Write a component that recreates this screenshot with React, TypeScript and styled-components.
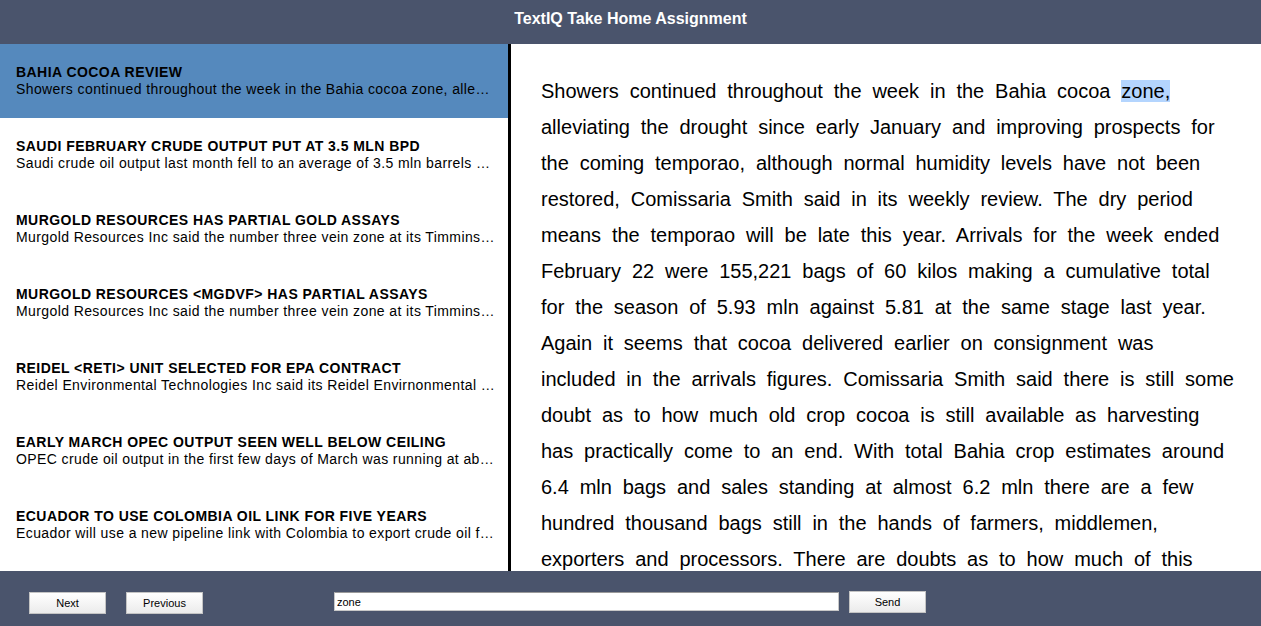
import React, { useState } from "react";
import styled, { createGlobalStyle } from "styled-components";

const GlobalStyle = createGlobalStyle`
  html, body {
    margin: 0;
    padding: 0;
    overflow: hidden;
    background: #ffffff;
  }
  * { box-sizing: border-box; }
`;

const Page = styled.div`
  display: flex;
  flex-direction: column;
  width: 1261px;
  height: 626px;
  font-family: "Liberation Sans", Arial, Helvetica, sans-serif;
  color: #000;
`;

const Header = styled.header`
  flex: 0 0 44px;
  background: #4a546c;
  display: flex;
  justify-content: center;
  align-items: flex-start;
  padding-top: 10px;
`;

const Title = styled.h1`
  margin: 0;
  font-size: 16px;
  line-height: 18px;
  font-weight: 700;
  color: #ffffff;
`;

const Main = styled.main`
  flex: 1 1 auto;
  display: flex;
  min-height: 0;
`;

const List = styled.ul`
  flex: 0 0 511px;
  margin: 0;
  padding: 0;
  list-style: none;
  border-right: 3px solid #000;
  overflow: hidden;
`;

const Item = styled.li<{ $active?: boolean }>`
  height: 74px;
  padding: 20px 12px 20px 16px;
  background: ${(p) => (p.$active ? "#5589bd" : "#ffffff")};
  cursor: pointer;
`;

const ItemTitle = styled.div`
  font-size: 14px;
  line-height: 17px;
  font-weight: 700;
  letter-spacing: 0.45px;
  color: #000;
  white-space: nowrap;
  overflow: hidden;
  text-overflow: ellipsis;
`;

const ItemText = styled.div`
  font-size: 14px;
  line-height: 17px;
  letter-spacing: 0.4px;
  color: #000;
  white-space: nowrap;
  overflow: hidden;
  text-overflow: ellipsis;
`;

const Article = styled.article`
  flex: 1 1 auto;
  padding: 29px 25px 0 30px;
  overflow: hidden;
`;

const Body = styled.p`
  margin: 0;
  font-size: 20px;
  line-height: 36px;
  word-spacing: 5.3px;
  color: #000;
`;

const Mark = styled.span`
  background: #b4d5fe;
`;

const Footer = styled.footer`
  flex: 0 0 55px;
  background: #4a546c;
  display: flex;
  align-items: flex-start;
  padding: 21px 0 0 29px;
`;

const Button = styled.button<{ $offset?: number }>`
  width: 77px;
  height: 22px;
  margin-left: ${(p) => p.$offset ?? 0}px;
  padding: 1px 0 0;
  border: 1px solid #c4c4c4;
  background: linear-gradient(#ffffff, #ebebeb);
  font-family: "Liberation Sans", Arial, sans-serif;
  font-size: 11px;
  line-height: 13px;
  color: #000;
  cursor: pointer;
`;

const Search = styled.input`
  width: 505px;
  height: 19px;
  margin: 0 0 0 131px;
  padding: 0 2px;
  border: 1px solid #c8c8c8;
  border-top-color: #9a9a9a;
  background: #ffffff;
  font-family: "Liberation Sans", Arial, sans-serif;
  font-size: 11px;
  line-height: 13px;
  color: #000;
  outline: none;
`;

const SendButton = styled(Button)`
  margin-left: 10px;
  margin-top: -1px;
  padding: 0;
`;

const docs = [
  {
    title: "BAHIA COCOA REVIEW",
    text: "Showers continued throughout the week in the Bahia cocoa zone, alleviating the drought since early January and improving prospects for the coming temporao.",
  },
  {
    title: "SAUDI FEBRUARY CRUDE OUTPUT PUT AT 3.5 MLN BPD",
    text: "Saudi crude oil output last month fell to an average of 3.5 mln barrels per day (bpd) from 3.8 mln bpd in January.",
  },
  {
    title: "MURGOLD RESOURCES HAS PARTIAL GOLD ASSAYS",
    text: "Murgold Resources Inc said the number three vein zone at its Timmins, Ontario, property returned gold assays.",
  },
  {
    title: "MURGOLD RESOURCES <MGDVF> HAS PARTIAL ASSAYS",
    text: "Murgold Resources Inc said the number three vein zone at its Timmins, Ontario, property returned gold assays.",
  },
  {
    title: "REIDEL <RETI> UNIT SELECTED FOR EPA CONTRACT",
    text: "Reidel Environmental Technologies Inc said its Reidel Envirnonmental Services Inc subsidiary was selected.",
  },
  {
    title: "EARLY MARCH OPEC OUTPUT SEEN WELL BELOW CEILING",
    text: "OPEC crude oil output in the first few days of March was running at about 14.7 mln barrels per day.",
  },
  {
    title: "ECUADOR TO USE COLOMBIA OIL LINK FOR FIVE YEARS",
    text: "Ecuador will use a new pipeline link with Colombia to export crude oil for the next five years.",
  },
  {
    title: "NATIONAL AVERAGE PRICES FOR FARMER-OWNED RESERVE",
    text: "The U.S. Agriculture Department reported the farmer-owned reserve national five-day average price.",
  },
];

const before =
  "Showers continued throughout the week in the Bahia cocoa ";
const after =
  " alleviating the drought since early January and improving prospects for the coming temporao, although normal humidity levels have not been restored, Comissaria Smith said in its weekly review. The dry period means the temporao will be late this year. Arrivals for the week ended February 22 were 155,221 bags of 60 kilos making a cumulative total for the season of 5.93 mln against 5.81 at the same stage last year. Again it seems that cocoa delivered earlier on consignment was included in the arrivals figures. Comissaria Smith said there is still some doubt as to how much old crop cocoa is still available as harvesting has practically come to an end. With total Bahia crop estimates around 6.4 mln bags and sales standing at almost 6.2 mln there are a few hundred thousand bags still in the hands of farmers, middlemen, exporters and processors. There are doubts as to how much of this cocoa would be fit for export as shippers are now experiencing dificulties in obtaining +Bahia superior+ certificates.";

export default function App() {
  const [active, setActive] = useState(0);
  const [query, setQuery] = useState("zone");

  return (
    <>
      <GlobalStyle />
      <Page>
        <Header>
          <Title>TextIQ Take Home Assignment</Title>
        </Header>
        <Main>
          <List>
            {docs.map((d, i) => (
              <Item key={i} $active={i === active} onClick={() => setActive(i)}>
                <ItemTitle>{d.title}</ItemTitle>
                <ItemText>{d.text}</ItemText>
              </Item>
            ))}
          </List>
          <Article>
            <Body>
              {before}
              <Mark>zone,</Mark>
              {after}
            </Body>
          </Article>
        </Main>
        <Footer>
          <Button onClick={() => setActive((a) => Math.min(a + 1, docs.length - 1))}>Next</Button>
          <Button $offset={20} onClick={() => setActive((a) => Math.max(a - 1, 0))}>
            Previous
          </Button>
          <Search value={query} onChange={(e) => setQuery(e.target.value)} />
          <SendButton>Send</SendButton>
        </Footer>
      </Page>
    </>
  );
}
